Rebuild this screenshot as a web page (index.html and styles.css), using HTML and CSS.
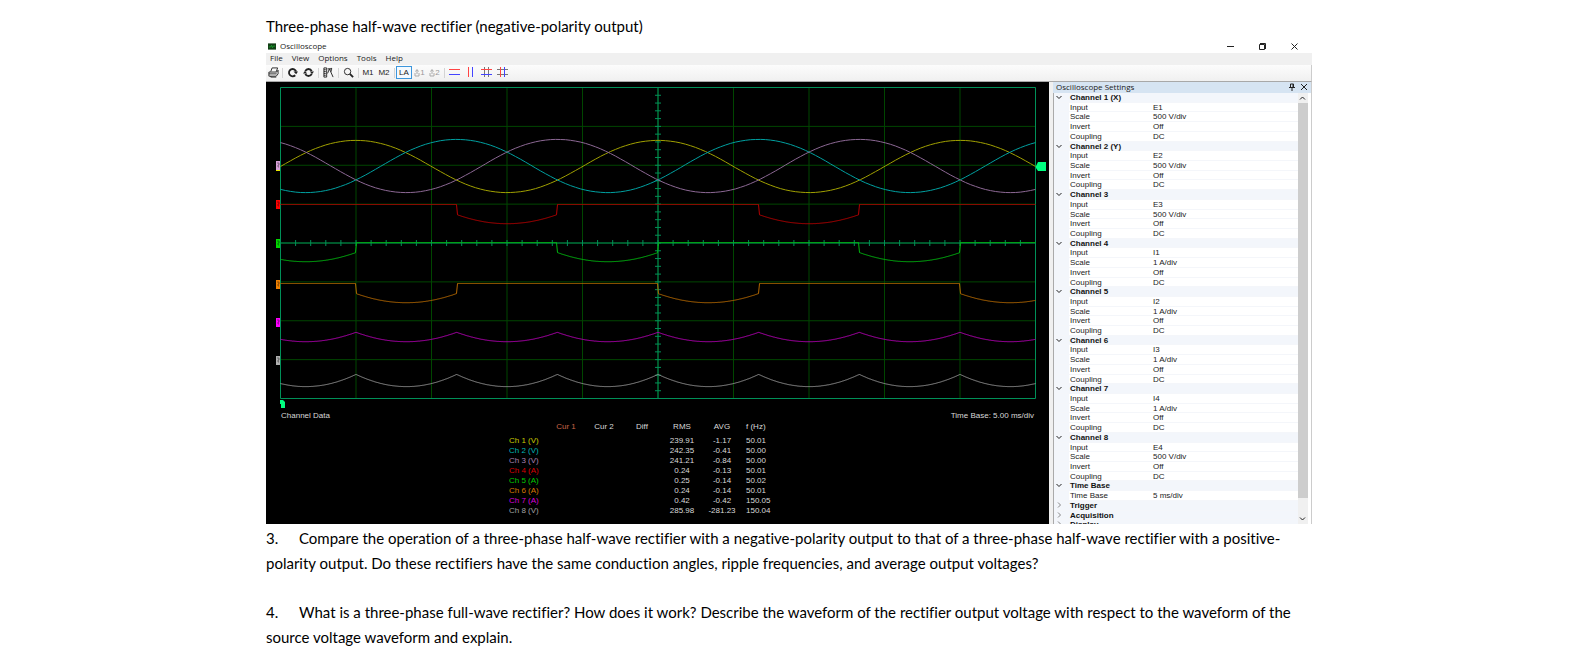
FILE: index.html
```html
<!DOCTYPE html>
<html lang="en">
<head>
    <meta charset="UTF-8">
    <title>Three-phase half-wave rectifier</title>
    <link rel="stylesheet" href="styles.css">
</head>
<body>
    <main class="page">
        <p class="caption">Three-phase half-wave rectifier (negative-polarity output)</p>

        <section class="window">
            <header class="titlebar">
                <svg class="app-icon" viewBox="0 0 9 7"><rect width="9" height="7" fill="#123f16"/><path d="M1 4h2l1-2 1 3 1-2h2" fill="none" stroke="#18a02c"/></svg>
                <span class="title">Oscilloscope</span>
                <button class="win-btn" aria-label="Minimize"><svg viewBox="0 0 9 9"><path d="M1 4.500h7"/></svg></button>
                <button class="win-btn" aria-label="Restore"><svg viewBox="0 0 9 9"><path d="M1.500 2.500h5v5h-5zM2 1.500h5.500V7"/></svg></button>
                <button class="win-btn" aria-label="Close"><svg viewBox="0 0 9 9"><path d="M1.500 1.500l6 6M7.500 1.500l-6 6"/></svg></button>
            </header>

            <nav class="menu">
                <button>File</button>
                <button>View</button>
                <button>Options</button>
                <button>Tools</button>
                <button>Help</button>
            </nav>

            <div class="toolbar">
                <button class="tool print" aria-label="Print"><svg viewBox="0 0 12 12"><path d="M3 5l1.500-4h6L9 5M1 5.500h8.500l1.500-2v4l-2 2.500H1zM1 7.500h8.500M3 10v1h6"/></svg></button>
                <span class="divider"></span>
                <button class="tool" aria-label="Single refresh"><svg viewBox="0 0 12 12" class="bold"><path d="M9 9a4 4 0 1 1 1-4"/><path class="solid" d="M7 5h5l-2 3z"/></svg></button>
                <button class="tool" aria-label="Continuous refresh"><svg viewBox="0 0 12 12" class="bold"><path d="M2.500 4.500a3.800 3.800 0 0 1 7 0M2.500 7.500a3.800 3.800 0 0 0 7 0"/><path class="solid" d="M7.500 5H12L9.800 8zM0 7h4.500L2.200 4z"/></svg></button>
                <span class="divider"></span>
                <button class="tool" aria-label="Autoscale"><svg viewBox="0 0 12 12"><path d="M1 1h3v10H1zM1 3h2M1 5h2M1 7h2M1 9h2M5 7l2-5 4 9M5 2h5M9 1v4"/></svg></button>
                <span class="divider"></span>
                <button class="tool" aria-label="Zoom"><svg viewBox="0 0 12 12"><circle cx="5" cy="5" r="3.500"/><path class="bold" d="M7.500 7.500L11 11"/></svg></button>
                <span class="divider"></span>
                <button class="tool">M1</button>
                <button class="tool">M2</button>
                <span class="divider"></span>
                <button class="tool active">LA</button>
                <button class="tool off" disabled><svg viewBox="0 0 6 9"><path d="M3 6V2M1.500 3.500L3 1.500l1.500 2M1 5v3h4V5"/></svg>1</button>
                <button class="tool off" disabled><svg viewBox="0 0 6 9"><path d="M3 6V2M1.500 3.500L3 1.500l1.500 2M1 5v3h4V5"/></svg>2</button>
                <span class="divider"></span>
                <button class="tool" aria-label="Horizontal cursors"><svg viewBox="0 0 11 11"><path class="red" d="M0 2.500h11"/><path class="blue" d="M0 7.500h11"/></svg></button>
                <button class="tool" aria-label="Vertical cursors"><svg viewBox="0 0 11 11"><path class="red" d="M3.500 0v10"/><path class="blue" d="M7.500 0v10"/></svg></button>
                <button class="tool" aria-label="Cross cursors, horizontal"><svg viewBox="0 0 11 11"><path class="gray" d="M3.500 0v10M7.500 0v10"/><path class="red" d="M0 2.500h11"/><path class="blue" d="M0 7.500h11"/></svg></button>
                <button class="tool" aria-label="Cross cursors, vertical"><svg viewBox="0 0 11 11"><path class="gray" d="M0 2.500h11M0 7.500h11"/><path class="red" d="M3.500 0v10"/><path class="blue" d="M7.500 0v10"/></svg></button>
            </div>

            <div class="work">
                <div class="scope">
                    <svg class="screen" viewBox="0 0 783 327">
                        <g id="grid"></g>
                        <g id="traces"></g>
                        <g id="markers"></g>
                    </svg>
                    <div class="scope-info">
                        <span>Channel Data</span>
                        <span>Time Base: 5.00 ms/div</span>
                    </div>
                    <table class="readings">
                        <thead>
                            <tr><th></th><th class="cur1">Cur 1</th><th>Cur 2</th><th>Diff</th><th class="rms">RMS</th><th>AVG</th><th class="freq">f (Hz)</th></tr>
                        </thead>
                        <tbody>
                            <tr><th class="ch1">Ch 1 (V)</th><td></td><td></td><td></td><td>239.91</td><td>-1.17</td><td>50.01</td></tr>
                            <tr><th class="ch2">Ch 2 (V)</th><td></td><td></td><td></td><td>242.35</td><td>-0.41</td><td>50.00</td></tr>
                            <tr><th class="ch3">Ch 3 (V)</th><td></td><td></td><td></td><td>241.21</td><td>-0.84</td><td>50.00</td></tr>
                            <tr><th class="ch4">Ch 4 (A)</th><td></td><td></td><td></td><td>0.24</td><td>-0.13</td><td>50.01</td></tr>
                            <tr><th class="ch5">Ch 5 (A)</th><td></td><td></td><td></td><td>0.25</td><td>-0.14</td><td>50.02</td></tr>
                            <tr><th class="ch6">Ch 6 (A)</th><td></td><td></td><td></td><td>0.24</td><td>-0.14</td><td>50.01</td></tr>
                            <tr><th class="ch7">Ch 7 (A)</th><td></td><td></td><td></td><td>0.42</td><td>-0.42</td><td>150.05</td></tr>
                            <tr><th class="ch8">Ch 8 (V)</th><td></td><td></td><td></td><td>285.98</td><td>-281.23</td><td>150.04</td></tr>
                        </tbody>
                    </table>
                </div>

                <aside class="settings">
                    <div class="settings-head">
                        <span>Oscilloscope Settings</span>
                        <button aria-label="Pin"><svg viewBox="0 0 8 8"><path d="M2.500 1h3v3.500h-3zM1 4.500h6M4 4.500V8"/><path d="M5 1v3.500"/></svg></button>
                        <button aria-label="Close settings"><svg viewBox="0 0 8 8"><path d="M1 1l6 6M7 1L1 7"/></svg></button>
                    </div>
                    <div class="settings-body">
                        <table class="props" id="props"></table>
                        <div class="scrollbar">
                            <svg viewBox="0 0 9 9"><path d="M2 6l2.500-2.500L7 6"/></svg>
                            <div class="thumb"></div>
                            <svg viewBox="0 0 9 9"><path d="M2 3l2.500 2.500L7 3"/></svg>
                        </div>
                    </div>
                </aside>
            </div>
        </section>

        <p class="question"><span class="num">3.</span>Compare the operation of a three-phase half-wave rectifier with a negative-polarity output to that of a three-phase half-wave rectifier with a positive-polarity output. Do these rectifiers have the same conduction angles, ripple frequencies, and average output voltages?</p>
        <p class="question"><span class="num">4.</span>What is a three-phase full-wave rectifier? How does it work? Describe the waveform of the rectifier output voltage with respect to the waveform of the source voltage waveform and explain.</p>
    </main>

    <script>
        // Plot area: 10 x 8 divisions
        const L = 14.5, T = 5.5, W = 755, H = 311;
        const DX = W / 10, DY = H / 8;
        const PERIOD = DX * 4;

        function path(d, stroke) {
            return `<path d="${d}" fill="none" stroke="${stroke}"/>`;
        }

        // Grid, centre axes and their ticks
        let minor = '', axes = '';
        for (let i = 1; i < 10; i++) minor += `M${L + i * DX} ${T}v${H}`;
        for (let i = 1; i < 8; i++) minor += `M${L} ${T + i * DY}h${W}`;
        axes += `M${L} ${T}h${W}v${H}h${-W}zM${L + W / 2} ${T}v${H}M${L} ${T + H / 2}h${W}`;
        for (let i = 1; i < 50; i++) axes += `M${L + i * DX / 5} ${T + H / 2 - 3}v6`;
        for (let i = 1; i < 40; i++) axes += `M${L + W / 2 - 3} ${T + i * DY / 5}h6`;
        document.getElementById('grid').innerHTML = path(minor, '#004600') + path(axes, '#009058');

        // Source voltage of phase n (0, 1, 2)
        function phase(x, n) {
            const a = 2 * Math.PI * (x / PERIOD - n / 3);
            return Math.sin(a) + 0.015 * Math.sin(3 * a);
        }

        function lowest(x) {
            return Math.max(-phase(x, 0), -phase(x, 1), -phase(x, 2));
        }

        // Each diode conducts while its phase is the most negative one
        function current(x, n) {
            return -phase(x, n) >= lowest(x) ? -phase(x, n) : 0;
        }

        function trace(f, stroke, step) {
            let d = '';
            for (let x = 0; x <= W; x += step) {
                d += (x ? 'L' : 'M') + (L + x) + ' ' + f(x).toFixed(1);
            }
            return path(d, stroke);
        }

        document.getElementById('traces').innerHTML =
            trace(x => 84.5 - 26.5 * phase(x, 0), '#a0a000', 5) +
            trace(x => 84 - 27 * phase(x, 1), '#00a0a0', 5) +
            trace(x => 84 - 27 * phase(x, 2), '#8c6894', 5) +
            trace(x => 122.5 + 19.5 * current(x, 0), '#b40000', 1) +
            trace(x => 160.5 + 19.5 * current(x, 1), '#00b810', 1) +
            trace(x => 201.5 + 19.5 * current(x, 2), '#b46800', 1) +
            trace(x => 240 + 20 * lowest(x), '#b400b4', 1) +
            trace(x => 279 + 26 * lowest(x), '#909090', 1);

        const tabs = [[79, '#d8a0d8'], [118, '#ff0000'], [157, '#00d800'], [198, '#f08000'], [236, '#ff00ff'], [274, '#b0b0b0']];
        document.getElementById('markers').innerHTML =
            tabs.map(([y, c]) => `<rect x="10" y="${y}" width="4" height="9" fill="${c}" stroke="none"/><path d="M11 ${y + 2}h2v2h-1v2h1" fill="none" stroke="#000" stroke-opacity=".4"/>`).join('') +
            '<path d="M10 88.500h4" stroke="#e8e800"/>' +
            '<path d="M770 84l2-4h8v9h-8l-2-3z" fill="#00ff80" stroke="none"/>' +
            '<path d="M14 318h3l2 2v6h-4v-4h-1z" fill="#00ff80" stroke="none"/>';

        // Property list
        const groups = [
            ['Channel 1 (X)', 'E1', '500 V/div'], ['Channel 2 (Y)', 'E2', '500 V/div'],
            ['Channel 3', 'E3', '500 V/div'], ['Channel 4', 'I1', '1 A/div'],
            ['Channel 5', 'I2', '1 A/div'], ['Channel 6', 'I3', '1 A/div'],
            ['Channel 7', 'I4', '1 A/div'], ['Channel 8', 'E4', '500 V/div']
        ];

        function head(name, open) {
            const d = open ? 'M1.500 3l2.500 2.500L6.500 3' : 'M3 1.500L5.500 4 3 6.500';
            return `<tr class="group ${open ? '' : 'closed'}"><td><svg viewBox="0 0 8 8"><path d="${d}"/></svg></td><th colspan="2">${name}</th></tr>`;
        }

        function row(name, value) {
            return `<tr><td></td><th>${name}</th><td>${value}</td></tr>`;
        }

        document.getElementById('props').innerHTML = '<tbody>' +
            groups.map(([name, input, scale]) =>
                head(name, true) + row('Input', input) + row('Scale', scale) + row('Invert', 'Off') + row('Coupling', 'DC')
            ).join('') +
            head('Time Base', true) + row('Time Base', '5 ms/div') +
            head('Trigger') + head('Acquisition') + head('Display') + '</tbody>';
    </script>
</body>
</html>
```
FILE: styles.css
```css
* {
    box-sizing: border-box;
}
body {
    margin: 0;
    background: #fff;
    color: #000;
    font-family: Lato, "Open Sans", sans-serif;
    font-size: 15px;
    font-variant-ligatures: none;
}
button {
    display: flex;
    align-items: center;
    justify-content: center;
    padding: 0;
    border: 0;
    background: none;
    color: inherit;
    font: inherit;
}
svg {
    display: block;
    fill: none;
    stroke: #222;
}
th {
    font-weight: normal;
    text-align: left;
}
.page {
    max-width: 1064px;
    margin: 0 auto;
    padding: 14px 18px 0 0;
}
.caption {
    margin: 0;
    line-height: 25px;
}
.question {
    margin: 2px 0 24px;
    line-height: 25px;
}
.num {
    display: inline-block;
    width: 33px;
}
.bold {
    stroke-width: 2;
}

/* Window frame */
.window {
    font-family: "Open Sans", sans-serif;
    font-size: 8px;
    line-height: 10px;
    color: #222;
}
.titlebar {
    display: flex;
    align-items: center;
    height: 14px;
    padding: 0 10px 0 2px;
}
.app-icon {
    width: 8px;
    height: 7px;
    stroke: none;
}
.title {
    flex: 1;
    padding-left: 4px;
}
.win-btn {
    width: 16px;
    height: 12px;
    margin-left: 16px;
}
.win-btn svg {
    width: 9px;
    height: 9px;
}
.menu {
    display: flex;
    gap: 9px;
    height: 12px;
    padding: 0 4px 2px;
    background: #f0f0f0;
}
.toolbar {
    display: flex;
    align-items: center;
    height: 16px;
    padding-bottom: 1px;
    border-right: 1px solid #ccc;
    background: linear-gradient(#fcfcfc, #f0f0f0);
}
.divider {
    width: 1px;
    height: 10px;
    margin: 0 1px 0 2px;
    background: #d4d4d4;
}
.tool {
    width: 16px;
    height: 13px;
    font-family: "Liberation Sans", sans-serif;
    font-size: 8px;
}
.tool svg {
    width: 11px;
    height: 11px;
}
.tool.print {
    width: 14px;
}
.tool .solid {
    fill: #222;
    stroke: none;
}
.tool .red {
    stroke: #f44;
}
.tool .blue {
    stroke: #44f;
}
.tool .gray {
    stroke: #777;
}
.tool.active {
    border: 1px solid #3c96dc;
    background: #f4faff;
}
.tool.off {
    width: 15px;
    color: #999;
}
.tool.off svg {
    width: 6px;
    height: 9px;
    stroke: #aaa;
}

/* Scope screen */
.work {
    display: flex;
    height: 443px;
    border-top: 1px solid #a8a8a8;
    border-right: 1px solid #ccc;
}
.scope {
    flex: 1;
    min-width: 0;
    background: #000;
    color: #d8d8d8;
    font-family: "Liberation Sans", sans-serif;
}
.screen {
    width: 100%;
}
.scope-info {
    display: flex;
    justify-content: space-between;
    padding: 2px 15px 0;
}
.readings {
    width: 297px;
    margin: 1px auto 0;
    table-layout: fixed;
    border-spacing: 0;
}
.readings th,
.readings td {
    width: 38px;
    padding: 0;
    text-align: center;
    white-space: nowrap;
}
.readings thead th {
    padding-bottom: 4px;
}
.readings .rms {
    width: 42px;
}
.readings .freq {
    width: 65px;
}
.readings tr > :first-child {
    text-align: left;
}
.readings tr > :last-child {
    padding-left: 5px;
    text-align: left;
}

/* Settings panel */
.settings {
    width: 262px;
    display: flex;
    flex-direction: column;
    border-left: 4px solid #f0f0f0;
    background: #fff;
}
.settings-head {
    display: flex;
    align-items: center;
    gap: 4px;
    height: 11px;
    padding: 0 3px 2px;
    background: #d6e4f2;
}
.settings-head span {
    flex: 1;
}
.settings-head svg {
    width: 8px;
    height: 8px;
}
.settings-body {
    flex: 1;
    min-height: 0;
    display: flex;
    overflow: hidden;
    border-left: 1px solid #aaa;
    padding-right: 3px;
}
.props {
    flex: 1;
    height: 437px;
    display: grid;
    grid-template-rows: repeat(45, minmax(0, 1fr));
    font-family: "Liberation Sans", sans-serif;
    line-height: 10px;
}
.props tbody {
    display: contents;
}
.props tr {
    display: grid;
    grid-template-columns: 15px 83px 1fr;
    grid-template-rows: minmax(0, 1fr);
    border-bottom: 1px solid #f4f6fa;
}
.props td,
.props th {
    padding: 0 0 0 1px;
}
.props td:first-child {
    background: #f3f6fb;
}
.props .group {
    grid-template-columns: 15px 1fr;
    background: #f3f6fb;
}
.props .group th {
    font-weight: bold;
    color: #111;
}
.props svg {
    width: 8px;
    height: 8px;
}
.props .closed svg {
    stroke: #888;
}
.scrollbar {
    width: 10px;
    display: flex;
    flex-direction: column;
    background: #f0f0f0;
}
.scrollbar svg {
    width: 9px;
    height: 10px;
}
.thumb {
    height: 395px;
    margin-bottom: auto;
    background: #cdcdcd;
}

/* Channel colours */
.cur1 { color: #c86446; }
.ch1 { color: #c8c800; }
.ch2 { color: #00b4b4; }
.ch3 { color: #a880b0; }
.ch4 { color: #d80000; }
.ch5 { color: #00c800; }
.ch6 { color: #d87800; }
.ch7 { color: #d800d8; }
.ch8 { color: #a0a0a0; }
```
